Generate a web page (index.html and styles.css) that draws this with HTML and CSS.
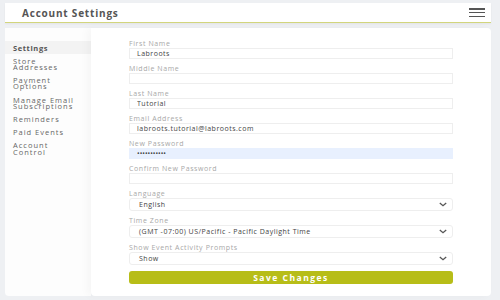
FILE: index.html
```html
<!DOCTYPE html>
<html lang="en">
<head>
    <meta charset="UTF-8">
    <meta name="viewport" content="width=device-width, initial-scale=1.0">
    <title>Account Settings</title>
    <link rel="stylesheet" href="styles.css">
</head>
<body>
    <header class="topbar">
        <h1>Account Settings</h1>
        <button class="menu-btn" aria-label="Menu">
            <span></span><span></span><span></span>
        </button>
    </header>

    <div class="layout">
        <nav class="sidebar">
            <a href="#" class="nav-item active">Settings</a>
            <a href="#" class="nav-item">Store<br>Addresses</a>
            <a href="#" class="nav-item">Payment<br>Options</a>
            <a href="#" class="nav-item">Manage Email<br>Subscriptions</a>
            <a href="#" class="nav-item">Reminders</a>
            <a href="#" class="nav-item">Paid Events</a>
            <a href="#" class="nav-item">Account<br>Control</a>
        </nav>

        <main class="panel">
            <form class="settings-form">
                <div class="field">
                    <label>First Name</label>
                    <input type="text" value="Labroots">
                </div>
                <div class="field">
                    <label>Middle Name</label>
                    <input type="text" value="">
                </div>
                <div class="field">
                    <label>Last Name</label>
                    <input type="text" value="Tutorial">
                </div>
                <div class="field">
                    <label>Email Address</label>
                    <input type="text" value="labroots.tutorial@labroots.com">
                </div>
                <div class="field">
                    <label>New Password</label>
                    <input type="password" class="autofill" value="passwordxx1">
                </div>
                <div class="field">
                    <label>Confirm New Password</label>
                    <input type="password" value="">
                </div>
                <div class="field">
                    <label>Language</label>
                    <div class="select">
                        <span>English</span>
                        <svg viewBox="0 0 10 6"><path d="M1 1l4 3.5L9 1"/></svg>
                    </div>
                </div>
                <div class="field">
                    <label>Time Zone</label>
                    <div class="select">
                        <span>(GMT -07:00) US/Pacific - Pacific Daylight Time</span>
                        <svg viewBox="0 0 10 6"><path d="M1 1l4 3.5L9 1"/></svg>
                    </div>
                </div>
                <div class="field">
                    <label>Show Event Activity Prompts</label>
                    <div class="select">
                        <span>Show</span>
                        <svg viewBox="0 0 10 6"><path d="M1 1l4 3.5L9 1"/></svg>
                    </div>
                </div>
                <button type="button" class="save-btn">Save Changes</button>
            </form>
        </main>
    </div>
</body>
</html>
```

FILE: styles.css
```css
* {
    margin: 0;
    padding: 0;
    box-sizing: border-box;
}

body {
    font-family: 'Open Sans', 'DejaVu Sans', sans-serif;
    background: #eef0f3;
    padding: 3px 9px 4px 5px;
    color: #444;
}

.topbar {
    height: 20px;
    background: white;
    border-bottom: 1.5px solid #d2d57c;
    display: flex;
    align-items: center;
    justify-content: space-between;
    padding: 0 6px 0 17px;
    box-shadow: 0 1px 2px rgba(0, 0, 0, 0.05);
}

.topbar h1 {
    font-size: 10px;
    font-weight: 700;
    color: #555;
    letter-spacing: 0.8px;
}

.menu-btn {
    width: 16px;
    height: 9px;
    border: none;
    background: none;
    display: flex;
    flex-direction: column;
    justify-content: space-between;
}

.menu-btn span {
    display: block;
    height: 1.5px;
    background: #555;
}

.layout {
    display: flex;
    margin-top: 5px;
    height: 268px;
}

.sidebar {
    width: 86px;
    background: #fdfdfd;
    border-radius: 0 0 0 4px;
    padding-top: 13px;
    display: flex;
    flex-direction: column;
}

.nav-item {
    display: block;
    padding: 3.5px 8px;
    font-size: 7.5px;
    line-height: 6.2px;
    color: #666;
    text-decoration: none;
    letter-spacing: 1px;
}

.nav-item.active {
    background: #f3f3f3;
    font-weight: 700;
    color: #555;
    letter-spacing: 0.6px;
}

.panel {
    flex: 1;
    background: white;
    border-radius: 0 4px 4px 4px;
    box-shadow: -4px 0 8px rgba(0, 0, 0, 0.03);
    padding: 12px 38px 0;
}

.field {
    display: flex;
    flex-direction: column;
    margin-bottom: 6px;
}

.field label {
    font-size: 7px;
    line-height: 8px;
    color: #a8a8a8;
    letter-spacing: 0.6px;
}

.field input {
    height: 11px;
    border: 1px solid #eeeeee;
    padding: 0 7px;
    font-family: inherit;
    font-size: 7px;
    color: #444;
    outline: none;
    letter-spacing: 0.5px;
}

.field input.autofill {
    background: #e8f0fe;
    border-color: #e8f0fe;
    letter-spacing: 0;
}

.select {
    height: 13px;
    border: 1px solid #eeeeee;
    border-radius: 3px;
    display: flex;
    align-items: center;
    justify-content: space-between;
    padding: 0 5px 0 9px;
    font-size: 7px;
    color: #444;
    letter-spacing: 0.5px;
}

.select svg {
    width: 8px;
    height: 5px;
    fill: none;
    stroke: #555;
    stroke-width: 1.6;
}

.save-btn {
    display: block;
    width: 100%;
    height: 13px;
    margin-top: 1px;
    border: none;
    border-radius: 3px;
    background: #b7bd18;
    color: white;
    font-family: inherit;
    font-size: 8.5px;
    font-weight: 700;
    letter-spacing: 1.5px;
}
```
